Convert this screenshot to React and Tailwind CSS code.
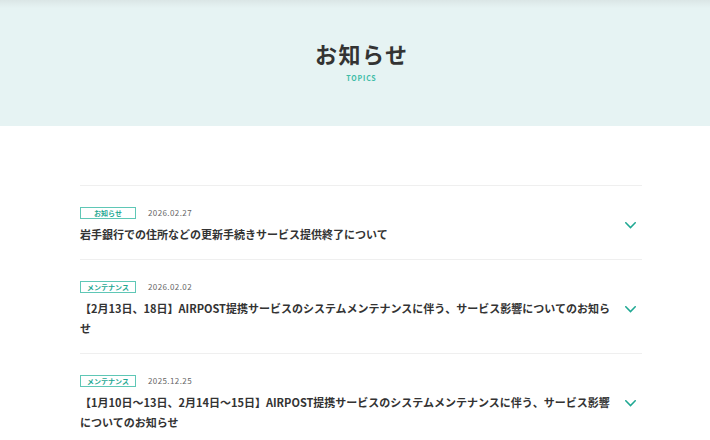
import React from "react";

const items = [
  {
    tag: "お知らせ",
    date: "2026.02.27",
    title: "岩手銀行での住所などの更新手続きサービス提供終了について",
  },
  {
    tag: "メンテナンス",
    date: "2026.02.02",
    title:
      "【2月13日、18日】AIRPOST提携サービスのシステムメンテナンスに伴う、サービス影響についてのお知らせ",
  },
  {
    tag: "メンテナンス",
    date: "2025.12.25",
    title:
      "【1月10日～13日、2月14日～15日】AIRPOST提携サービスのシステムメンテナンスに伴う、サービス影響についてのお知らせ",
  },
];

function Chevron() {
  return (
    <svg width="11" height="7" viewBox="0 0 11 7" fill="none">
      <polyline
        points="0.8,0.8 5.5,5.6 10.2,0.8"
        stroke="#1fa893"
        strokeWidth="1.5"
        strokeLinecap="square"
      />
    </svg>
  );
}

export default function App() {
  return (
    <div
      className="min-h-[440px] bg-white text-[#333]"
      style={{ fontFamily: '"Noto Sans CJK JP", "Noto Sans", sans-serif' }}
    >
      <header className="h-[126px] pl-[12px] flex flex-col items-center bg-[linear-gradient(to_bottom,#dbe6e6,#e6f3f3_8px,#e6f3f3)]">
        <h1 className="pt-[37px] pl-[0.07em] text-[22px] leading-[32px] font-bold tracking-[0.07em] text-[#333]">
          お知らせ
        </h1>
        <p className="mt-[4px] pl-[0.12em] text-[7px] leading-[10px] font-bold tracking-[0.12em] text-[#3dbca6]">
          TOPICS
        </p>
      </header>

      <main className="pl-[80px] pr-[68px] pt-[59px]">
        {items.map((it, i) => (
          <div
            key={i}
            className="flex items-center border-t border-[#efefef] pt-[21px] pb-[15px]"
          >
            <div className="flex-1 min-w-0">
              <div className="flex items-center">
                <span className="flex h-[12px] w-[56px] items-center justify-center border border-[#5fc7b6] text-[7px] leading-none font-bold text-[#1fa893]">
                  {it.tag}
                </span>
                <span className="ml-[12px] text-[8px] leading-none tracking-[0.05em] text-[#666]">
                  {it.date}
                </span>
              </div>
              <p className="mt-[5px] text-[11px] leading-[20px] font-bold text-[#333]">
                {it.title}
              </p>
            </div>
            <div className="ml-[10px] mr-[6px] flex w-[11px] shrink-0 items-center">
              <Chevron />
            </div>
          </div>
        ))}
      </main>
    </div>
  );
}
